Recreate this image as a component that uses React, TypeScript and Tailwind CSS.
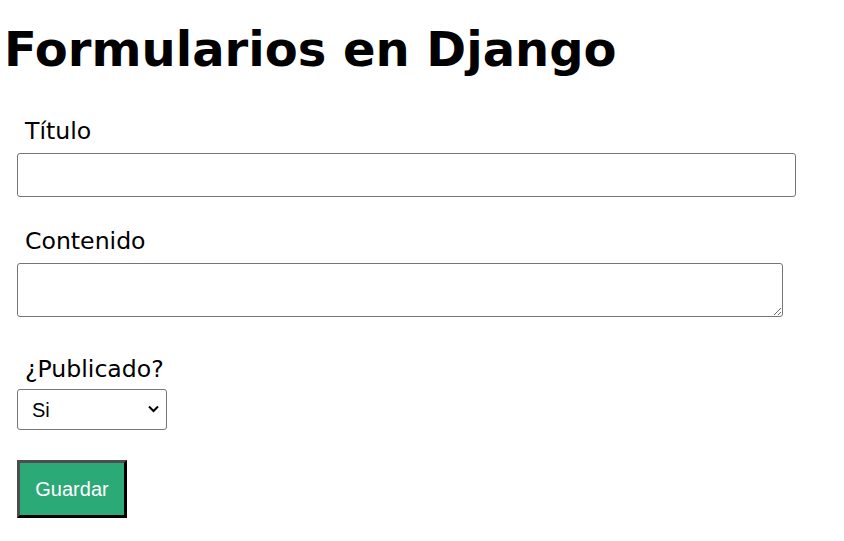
import React from "react";

export default function App() {
  return (
    <div className="min-h-[541px] w-[844px] bg-white text-black">
      <h1 className="pl-[4px] pt-[21px] text-[48px] font-bold leading-[56px] [font-family:'DejaVu_Sans',sans-serif]">
        Formularios en Django
      </h1>
      <form className="flex flex-col pl-[17px] pt-[39px] [font-family:'DejaVu_Sans',sans-serif]">
        <label className="pl-[8px] text-[23.6px] leading-[30px]">Título</label>
        <input
          type="text"
          className="mt-[7px] h-[44px] w-[779px] rounded-[3px] border border-[#767676] bg-white"
        />
        <label className="mt-[29px] pl-[8px] text-[23.6px] leading-[30px]">Contenido</label>
        <textarea className="mt-[7px] h-[54px] w-[766px] rounded-[3px] border border-[#767676] bg-white" />
        <label className="mt-[37px] pl-[8px] text-[23.6px] leading-[30px]">¿Publicado?</label>
        <div className="relative mt-[5px] h-[41px] w-[150px]">
          <select className="h-full w-full appearance-none rounded-[3px] border border-[#767676] bg-white pl-[14px] text-[20px] [font-family:'Liberation_Sans',Arial,sans-serif]">
            <option>Si</option>
            <option>No</option>
          </select>
          <svg
            className="pointer-events-none absolute right-[8px] top-[16px]"
            width="11"
            height="8"
            viewBox="0 0 11 8"
          >
            <path d="M1 1.5 L5.5 6 L10 1.5" fill="none" stroke="#000" strokeWidth="2" />
          </svg>
        </div>
        <div className="mt-[30px]">
          <button
            type="button"
            className="h-[58px] w-[110px] border-[3px] border-t-[#4d4d4d] border-l-[#4d4d4d] border-r-black border-b-black bg-[#2ba977] text-[20px] text-white [font-family:'Liberation_Sans',Arial,sans-serif]"
          >
            Guardar
          </button>
        </div>
      </form>
    </div>
  );
}
